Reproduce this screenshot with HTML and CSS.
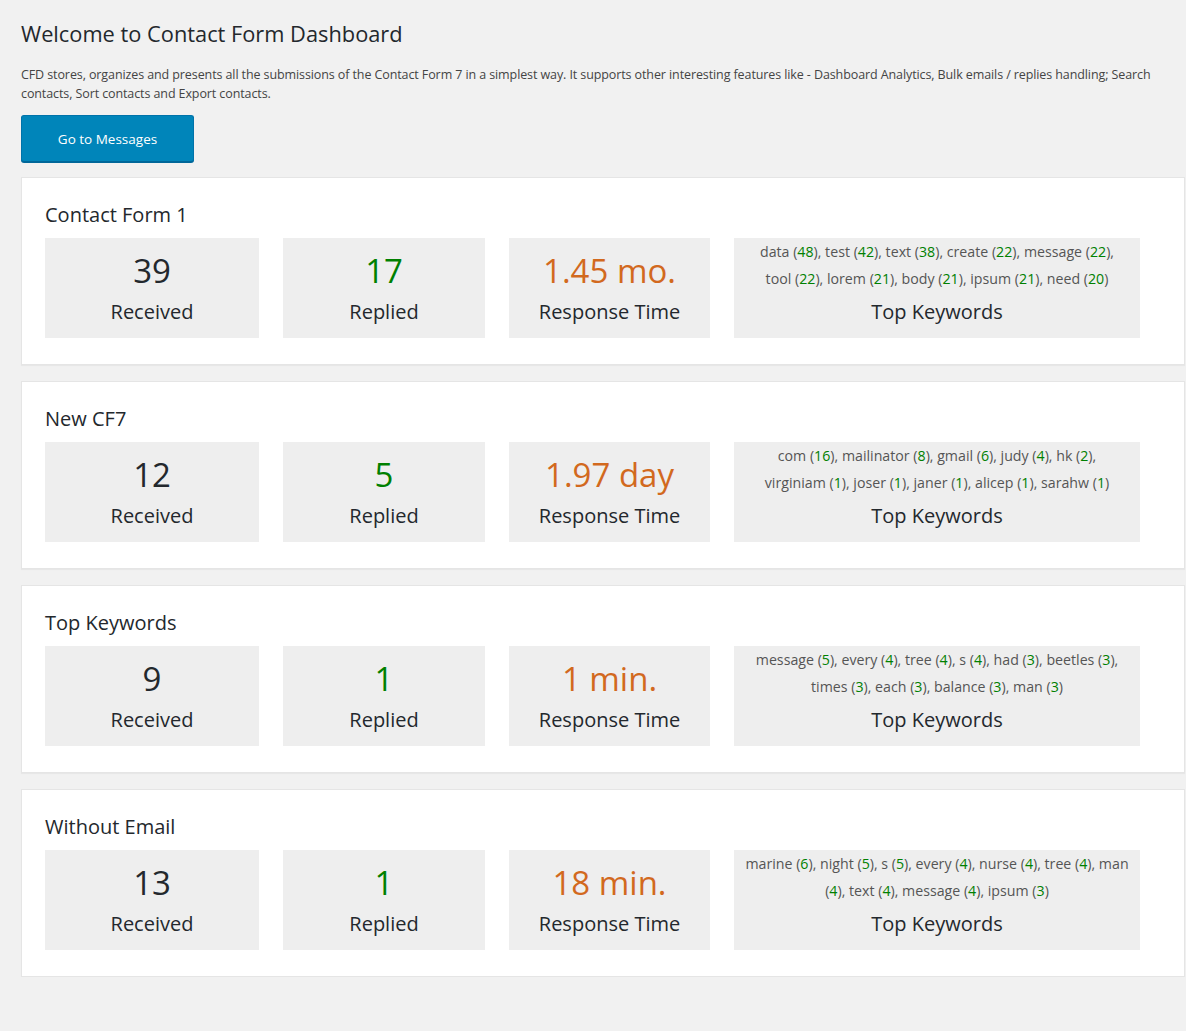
FILE: index.html
```html
<!DOCTYPE html>
<html lang="en">
<head>
<meta charset="utf-8">
<title>Contact Form Dashboard</title>
<link rel="stylesheet" href="styles.css">
</head>
<body>
<div class="wrap">
  <h1 class="page-title">Welcome to Contact Form Dashboard</h1>
  <p class="intro">CFD stores, organizes and presents all the submissions of the Contact Form 7 in a simplest way. It supports other interesting features like - Dashboard Analytics, Bulk emails / replies handling; Search contacts, Sort contacts and Export contacts.</p>
  <a class="btn" href="#">Go to Messages</a>

  <section class="card">
    <h2 class="card-title">Contact Form 1</h2>
    <div class="stats">
      <div class="stat"><div class="num">39</div><div class="label">Received</div></div>
      <div class="stat"><div class="num green">17</div><div class="label">Replied</div></div>
      <div class="stat"><div class="num orange">1.45 mo.</div><div class="label">Response Time</div></div>
      <div class="stat kw"><div class="kw-list">data (<span class="cnt">48</span>), test (<span class="cnt">42</span>), text (<span class="cnt">38</span>), create (<span class="cnt">22</span>), message (<span class="cnt">22</span>),<br>tool (<span class="cnt">22</span>), lorem (<span class="cnt">21</span>), body (<span class="cnt">21</span>), ipsum (<span class="cnt">21</span>), need (<span class="cnt">20</span>)</div><div class="label">Top Keywords</div></div>
    </div>
  </section>

  <section class="card">
    <h2 class="card-title">New CF7</h2>
    <div class="stats">
      <div class="stat"><div class="num">12</div><div class="label">Received</div></div>
      <div class="stat"><div class="num green">5</div><div class="label">Replied</div></div>
      <div class="stat"><div class="num orange">1.97 day</div><div class="label">Response Time</div></div>
      <div class="stat kw"><div class="kw-list">com (<span class="cnt">16</span>), mailinator (<span class="cnt">8</span>), gmail (<span class="cnt">6</span>), judy (<span class="cnt">4</span>), hk (<span class="cnt">2</span>),<br>virginiam (<span class="cnt">1</span>), joser (<span class="cnt">1</span>), janer (<span class="cnt">1</span>), alicep (<span class="cnt">1</span>), sarahw (<span class="cnt">1</span>)</div><div class="label">Top Keywords</div></div>
    </div>
  </section>

  <section class="card">
    <h2 class="card-title">Top Keywords</h2>
    <div class="stats">
      <div class="stat"><div class="num">9</div><div class="label">Received</div></div>
      <div class="stat"><div class="num green">1</div><div class="label">Replied</div></div>
      <div class="stat"><div class="num orange">1 min.</div><div class="label">Response Time</div></div>
      <div class="stat kw"><div class="kw-list">message (<span class="cnt">5</span>), every (<span class="cnt">4</span>), tree (<span class="cnt">4</span>), s (<span class="cnt">4</span>), had (<span class="cnt">3</span>), beetles (<span class="cnt">3</span>), times (<span class="cnt">3</span>), each (<span class="cnt">3</span>), balance (<span class="cnt">3</span>), man (<span class="cnt">3</span>)</div><div class="label">Top Keywords</div></div>
    </div>
  </section>

  <section class="card">
    <h2 class="card-title">Without Email</h2>
    <div class="stats">
      <div class="stat"><div class="num">13</div><div class="label">Received</div></div>
      <div class="stat"><div class="num green">1</div><div class="label">Replied</div></div>
      <div class="stat"><div class="num orange">18 min.</div><div class="label">Response Time</div></div>
      <div class="stat kw"><div class="kw-list">marine (<span class="cnt">6</span>), night (<span class="cnt">5</span>), s (<span class="cnt">5</span>), every (<span class="cnt">4</span>), nurse (<span class="cnt">4</span>), tree (<span class="cnt">4</span>), man (<span class="cnt">4</span>), text (<span class="cnt">4</span>), message (<span class="cnt">4</span>), ipsum (<span class="cnt">3</span>)</div><div class="label">Top Keywords</div></div>
    </div>
  </section>
</div>
</body>
</html>
```
FILE: styles.css
```css
html, body {
  margin: 0;
  padding: 0;
  background: #f1f1f1;
}
body {
  font-family: "Open Sans", "Noto Sans", sans-serif;
  color: #444;
}
.wrap {
  padding: 0 1px 0 21px;
}
.page-title {
  margin: 0;
  padding: 20px 0 0;
  font-size: 21.8px;
  line-height: 28px;
  font-weight: 400;
  color: #23282d;
}
.intro {
  margin: 17px 0 0;
  font-size: 12.5px;
  line-height: 19px;
  color: #444;
  letter-spacing: -0.1px;
}
.btn {
  display: inline-flex;
  align-items: center;
  justify-content: center;
  box-sizing: border-box;
  width: 173px;
  height: 47px;
  margin-top: 12px;
  background: #0085ba;
  border: 1px solid #0073aa;
  border-bottom-color: #006799;
  box-shadow: 0 1px 0 #006799;
  border-radius: 3px;
  color: #fff;
  text-decoration: none;
  font-size: 13.5px;
}
.card {
  margin-top: 15px;
  background: #fff;
  border: 1px solid #e5e5e5;
  box-shadow: 0 1px 1px rgba(0,0,0,.04);
  padding: 22px 0 26px 23px;
}
.card + .card {
  margin-top: 16px;
}
.card-title {
  margin: 0 0 8px;
  font-size: 20px;
  line-height: 30px;
  font-weight: 400;
  color: #23282d;
}
.stats {
  display: grid;
  grid-template-columns: 214px 202px 201px 406px;
  column-gap: 24px;
}
.stat {
  background: #eeeeee;
  height: 100px;
  box-sizing: border-box;
  padding-top: 7px;
  text-align: center;
}
.num {
  font-size: 33px;
  line-height: 52px;
  color: #23282d;
}
.num.green { color: #008000; }
.num.orange { color: #d2691e; }
.label {
  font-size: 20px;
  line-height: 30px;
  color: #23282d;
}
.stat.kw {
  padding: 0 10px;
}
.kw-list {
  font-size: 14.2px;
  line-height: 27px;
  color: #555;
  margin-bottom: 5px;
}
.cnt {
  color: #008000;
}
```
